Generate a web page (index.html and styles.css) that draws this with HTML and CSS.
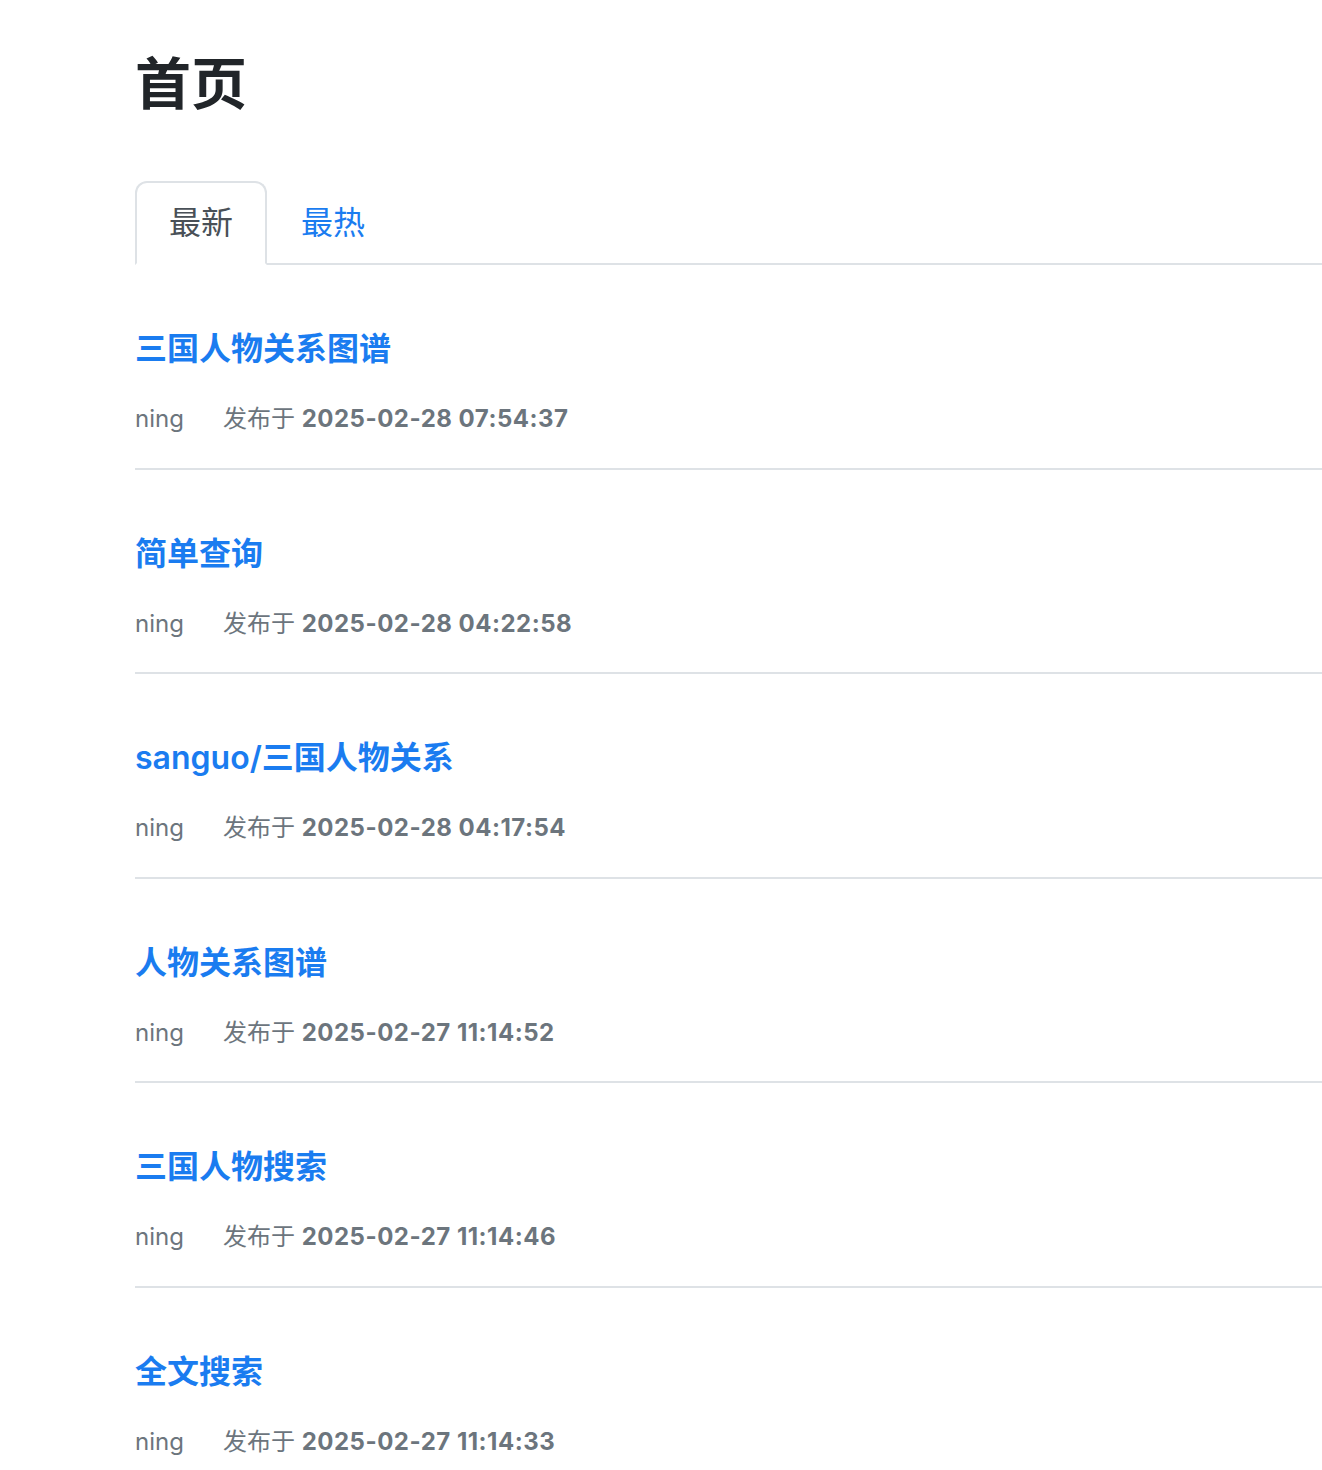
FILE: index.html
```html
<!DOCTYPE html>
<html lang="zh-CN">
<head>
<meta charset="utf-8">
<title>首页</title>
<link rel="stylesheet" href="styles.css">
</head>
<body>
<main class="page">
  <h1 class="page-title">首页</h1>
  <ul class="tabs">
    <li class="tab tab-active">最新</li>
    <li class="tab">最热</li>
  </ul>
  <div class="list">
    <article class="item">
      <a class="item-title" href="#">三国人物关系图谱</a>
      <div class="meta"><span class="author">ning</span><span class="pub">发布于 <b>2025-02-28 07:54:37</b></span></div>
    </article>
    <article class="item">
      <a class="item-title" href="#">简单查询</a>
      <div class="meta"><span class="author">ning</span><span class="pub">发布于 <b>2025-02-28 04:22:58</b></span></div>
    </article>
    <article class="item">
      <a class="item-title" href="#">sanguo/三国人物关系</a>
      <div class="meta"><span class="author">ning</span><span class="pub">发布于 <b>2025-02-28 04:17:54</b></span></div>
    </article>
    <article class="item">
      <a class="item-title" href="#">人物关系图谱</a>
      <div class="meta"><span class="author">ning</span><span class="pub">发布于 <b>2025-02-27 11:14:52</b></span></div>
    </article>
    <article class="item">
      <a class="item-title" href="#">三国人物搜索</a>
      <div class="meta"><span class="author">ning</span><span class="pub">发布于 <b>2025-02-27 11:14:46</b></span></div>
    </article>
    <article class="item">
      <a class="item-title" href="#">全文搜索</a>
      <div class="meta"><span class="author">ning</span><span class="pub">发布于 <b>2025-02-27 11:14:33</b></span></div>
    </article>
  </div>
</main>
</body>
</html>
```

FILE: styles.css
```css
* { box-sizing: border-box; }
html, body { margin: 0; padding: 0; background: #fff; }
body {
  font-family: Inter, "Noto Sans CJK SC", sans-serif;
  color: #212529;
  overflow: hidden;
}
.page {
  padding: 51px 0 0 135px;
}
.page-title {
  margin: 0 0 63px 0;
  font-size: 56px;
  line-height: 1.2;
  font-weight: 700;
  color: #212529;
}
.tabs {
  list-style: none;
  margin: 0;
  padding: 0;
  display: flex;
  border-bottom: 2px solid #dee2e6;
}
.tab {
  font-size: 32px;
  line-height: 48px;
  padding: 16px 32px;
  margin-bottom: -2px;
  color: #1a7cf0;
  border: 2px solid transparent;
  border-radius: 12px 12px 0 0;
}
.tab-active {
  color: #495057;
  border-color: #dee2e6 #dee2e6 #fff;
  background: #fff;
}
.item {
  display: flex;
  flex-direction: column;
  padding: 65px 0 30.5px 0;
  border-bottom: 2px solid #dee2e6;
}
.item-title {
  font-size: 32px;
  line-height: 38px;
  font-weight: 600;
  color: #1a7cf0;
  text-decoration: none;
  margin-bottom: 33px;
}
.meta {
  font-size: 24px;
  line-height: 36px;
  color: #6c757d;
  display: flex;
}
.author { margin-right: 39px; }
.pub b { font-weight: 700; letter-spacing: 0.5px; }
```
